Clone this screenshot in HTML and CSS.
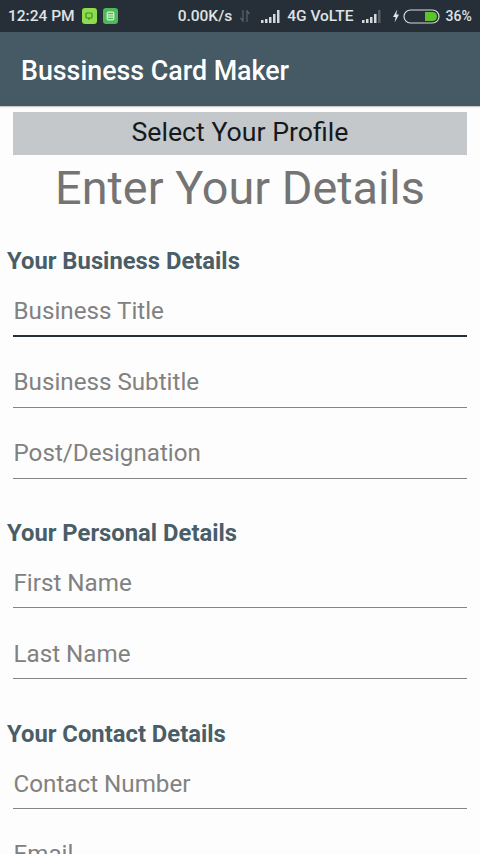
FILE: index.html
```html
<!DOCTYPE html>
<html>
<head>
<meta charset="utf-8">
<link rel="stylesheet" href="styles.css">
</head>
<body>
<div class="status">
  <span class="time">12:24 PM</span>
  <span class="nbadge nb1"><svg width="8" height="8" viewBox="0 0 8 8"><rect x="1" y="1" width="6" height="5" rx="1" fill="none" stroke="#3f8f2a" stroke-width="1.2"/><rect x="3" y="6" width="2" height="1.5" fill="#3f8f2a"/></svg></span>
  <span class="nbadge nb2"><svg width="9" height="10" viewBox="0 0 8 9"><rect x="1" y="1" width="6" height="7" rx="1" fill="none" stroke="#d8f5d0" stroke-width="1"/><path d="M1 3.5H7M1 5.5H7" stroke="#d8f5d0" stroke-width="1"/></svg></span>
  <span class="speed">0.00K/s</span>
  <svg class="arrows" width="12" height="14" viewBox="0 0 12 14"><path d="M4 1V12L1.5 9M8 13V2L10.5 5" fill="none" stroke="#5a6266" stroke-width="1.2"/></svg>
  <svg class="sig" width="20" height="15" viewBox="0 0 20 15"><g fill="#d5d9db"><rect x="0" y="11" width="2.5" height="3"/><rect x="4" y="10" width="2.5" height="4"/><rect x="8" y="8" width="2.5" height="6"/><rect x="12" y="5" width="2.5" height="9"/><rect x="16" y="1" width="2.5" height="13"/></g></svg>
  <span class="net">4G VoLTE</span>
  <svg class="sig2" width="20" height="15" viewBox="0 0 20 15"><g fill="#d5d9db"><rect x="0" y="11" width="2.5" height="3"/><rect x="4" y="10" width="2.5" height="4"/><rect x="8" y="8" width="2.5" height="6"/><rect x="12" y="5" width="2.5" height="9"/></g><rect x="16" y="1" width="2.5" height="13" fill="#566064"/></svg>
  <svg class="bolt" width="8" height="14" viewBox="0 0 8 14"><path d="M5.2 0.5L1 8H3.6L2.6 13.5L7 5.6H4.3Z" fill="#e4e7e8"/></svg>
  <svg class="batt" width="37" height="15" viewBox="0 0 37 15"><rect x="1" y="1" width="35" height="13" rx="6.5" fill="none" stroke="#d5d9db" stroke-width="1.2"/><path d="M22 3H29.5a4.5 4.5 0 0 1 0 9H22Z" fill="#5cc22e"/></svg>
  <span class="pct">36%</span>
</div>
<header class="appbar">Bussiness Card Maker</header>
<main class="content">
  <div class="profile">Select Your Profile</div>
  <h1 class="heading">Enter Your Details</h1>
  <h2 class="section first">Your Business Details</h2>
  <div class="field focus">Business Title</div>
  <div class="field">Business Subtitle</div>
  <div class="field">Post/Designation</div>
  <h2 class="section">Your Personal Details</h2>
  <div class="field">First Name</div>
  <div class="field low">Last Name</div>
  <h2 class="section contact">Your Contact Details</h2>
  <div class="field">Contact Number</div>
  <div class="field">Email</div>
</main>
</body>
</html>
```
FILE: styles.css
```css
* { box-sizing: border-box; }
html, body { margin: 0; padding: 0; height: 854px; overflow: hidden; }
body { background: #fdfdfd; font-family: Roboto, sans-serif; width: 480px; }
.status { height: 32px; background: #262f37; color: #dfe3e5; display: flex; align-items: center; padding-left: 8px; font-size: 15.5px; font-weight: 500; white-space: nowrap; }
.time { margin-right: 7px; }
.nbadge { width: 15px; height: 16px; border-radius: 3px; display: flex; align-items: center; justify-content: center; margin-right: 6px; }
.nb1 { background: #8fdc4e; }
.nb2 { background: #4fb858; }
.speed { margin-left: 54px; }
.arrows { margin-left: 7px; }
.sig { margin-left: 10px; }
.net { margin-left: 6px; }
.sig2 { margin-left: 8px; }
.bolt { margin-left: 10px; }
.batt { margin-left: 3px; }
.pct { margin-left: 6px; font-size: 14px; }
.appbar { height: 74px; background: #455a64; color: #fff; font-size: 26.8px; font-weight: 500; padding-left: 21px; padding-top: 4px; display: flex; align-items: center; box-shadow: 0 1px 1px rgba(0,0,0,.2); }
.content { padding: 6px 13px 0; }
.profile { height: 43px; background: #c4c8cb; color: #15191c; font-size: 26.7px; display: flex; align-items: center; justify-content: center; padding-bottom: 4px; }
.heading { margin: 6px 0 0; height: 54px; line-height: 54px; text-align: center; color: #747474; font-size: 46.8px; font-weight: 400; }
.section { margin: 39px 0 0 -6px; height: 30px; line-height: 30px; color: #4a5e68; font-size: 23.8px; font-weight: 700; }
.section.first { margin-top: 31px; }
.section.contact { margin-top: 40px; }
.field { height: 71px; padding-top: 30px; padding-left: 0.5px; font-size: 24.2px; line-height: 30px; color: #818181; border-bottom: 1px solid #858585; }
.field.low { padding-top: 31px; }
.section + .field { height: 60px; padding-top: 20px; }
.section + .field.focus { height: 61px; border-bottom: 2px solid #263238; }
```
